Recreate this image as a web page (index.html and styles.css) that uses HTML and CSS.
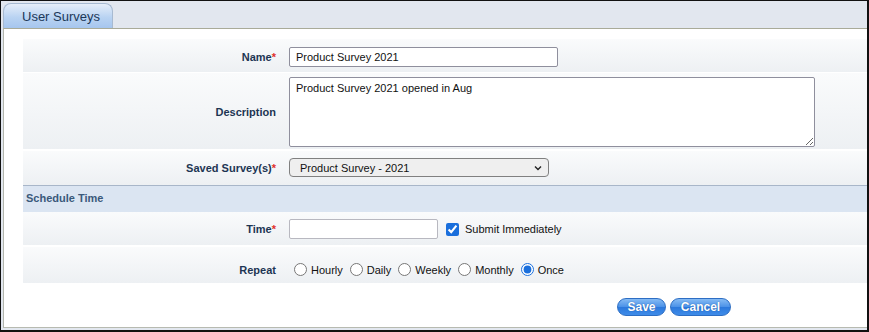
FILE: index.html
```html
<!DOCTYPE html>
<html>
<head>
<meta charset="utf-8">
<link rel="stylesheet" href="styles.css">
</head>
<body>
<div class="frame">
  <div class="tabbar">
    <div class="tab">User Surveys</div>
  </div>
  <div class="panel">
    <div class="form">
      <div class="row row-name">
        <label class="lbl">Name<span class="req">*</span></label>
        <div class="field"><input class="txt name-input" type="text" value="Product Survey 2021"></div>
      </div>
      <div class="row row-desc">
        <label class="lbl">Description</label>
        <div class="field"><textarea class="area">Product Survey 2021 opened in Aug</textarea></div>
      </div>
      <div class="row row-saved">
        <label class="lbl">Saved Survey(s)<span class="req">*</span></label>
        <div class="field">
          <div class="selwrap">
            <select class="sel"><option>Product Survey - 2021</option></select>
            <svg class="chev" width="8" height="6" viewBox="0 0 8 6"><path d="M1 1.5 L4 4.5 L7 1.5" fill="none" stroke="#222" stroke-width="1.4"/></svg>
          </div>
        </div>
      </div>
      <div class="section">Schedule Time</div>
      <div class="row row-time">
        <label class="lbl">Time<span class="req">*</span></label>
        <div class="field inline">
          <input class="txt time-input" type="text">
          <label class="chk"><input type="checkbox" checked><span>Submit Immediately</span></label>
        </div>
      </div>
      <div class="row row-repeat">
        <label class="lbl">Repeat</label>
        <div class="field inline radios">
          <label class="rad"><input type="radio" name="r"><span>Hourly</span></label>
          <label class="rad"><input type="radio" name="r"><span>Daily</span></label>
          <label class="rad"><input type="radio" name="r"><span>Weekly</span></label>
          <label class="rad"><input type="radio" name="r"><span>Monthly</span></label>
          <label class="rad"><input type="radio" name="r" checked><span>Once</span></label>
        </div>
      </div>
      <div class="actions">
        <button class="btn btn-save">Save</button>
        <button class="btn btn-cancel">Cancel</button>
      </div>
    </div>
  </div>
</div>
</body>
</html>
```

FILE: styles.css
```css
* { box-sizing: border-box; }
html, body { margin: 0; padding: 0; }
body {
  font-family: "Liberation Sans", Arial, sans-serif;
  background: #ffffff;
}
.frame {
  width: 869px;
  height: 332px;
  border-top: 1px solid #111;
  border-left: 1px solid #111;
  border-right: 2px solid #111;
  border-bottom: 2px solid #111;
  background: #e2e7ef;
  display: flex;
  flex-direction: column;
}
.tabbar {
  height: 27px;
  padding: 2px 0 0 2px;
  display: flex;
}
.tab {
  width: 110px;
  height: 25px;
  border: 1px solid #a7bad1;
  border-bottom: none;
  border-radius: 8px 8px 0 0;
  background: linear-gradient(#e6eef9, #b9d3f2 55%, #a6c6ee);
  color: #1c3858;
  font-size: 13px;
  padding: 5px 0 0 18px;
  line-height: 15px;
}
.panel {
  margin-left: 2px;
  height: 300px;
  background: #fff;
  border-top: 1px solid #a9ab99;
  border-left: 1px solid #b3b6ad;
  border-bottom: 1px solid #b7bab0;
}
.form {
  margin: 10px 0 0 19px;
}
.row {
  display: grid;
  grid-template-columns: 266px 1fr;
  align-items: center;
  background: linear-gradient(#fafbfc, #edf0f3);
}
.lbl {
  text-align: right;
  padding-right: 13px;
  font-size: 11px;
  font-weight: bold;
  color: #1d3553;
}
.req { color: #e0322c; }
.field { display: flex; align-items: center; }
.row-name { padding: 8px 0 5px; margin-bottom: 1px; }
.row-desc { padding: 4px 0 2px; margin-bottom: 2px; }
.row-saved { padding: 7px 0 8px; border-bottom: 1px solid #a8b6c9; }
.row-time { padding: 7px 0 6px; margin-bottom: 2px; }
.row-repeat { padding: 16px 0 7px; }
.txt {
  height: 20px;
  border: 1px solid #8f8f9d;
  border-radius: 2px;
  font-family: "Liberation Sans", Arial, sans-serif;
  font-size: 11px;
  padding: 1px 6px;
  color: #111;
  background: #fff;
}
.name-input { width: 269px; }
.time-input { width: 149px; border-color: #b8b8c0; }
.area {
  width: 526px;
  height: 70px;
  border: 1px solid #8f8f9d;
  border-radius: 2px;
  font-family: "Liberation Sans", Arial, sans-serif;
  font-size: 11px;
  padding: 4px 6px;
  color: #111;
  margin: 0;
}
.selwrap { position: relative; display: flex; }
.sel {
  -webkit-appearance: none;
  appearance: none;
  width: 260px;
  height: 19px;
  font-family: "Liberation Sans", Arial, sans-serif;
  font-size: 11px;
  border: 1px solid #808080;
  border-radius: 4px;
  background: #efefef;
  color: #111;
  padding: 0 10px;
  margin: 0;
}
.chev {
  position: absolute;
  right: 7px;
  top: 7px;
  pointer-events: none;
}
.section {
  height: 26px;
  background: #dbe5f2;
  color: #3a597b;
  font-size: 11px;
  font-weight: bold;
  padding: 6px 0 0 3px;
}
.chk, .rad {
  display: flex;
  align-items: center;
  font-size: 11px;
  color: #111;
}
.chk { margin-left: 8px; }
.chk input { width: 13px; height: 13px; margin: 0 6px 0 0; accent-color: #1a6fdc; }
.rad input { width: 13px; height: 13px; margin: 0 4px 0 5px; accent-color: #1a6fdc; }
.rad { margin-right: 2px; }
.actions {
  display: flex;
  gap: 4px;
  padding-left: 594px;
  margin-top: 15px;
}
.btn {
  height: 18px;
  border: 1px solid #2d6ec4;
  border-radius: 9px;
  background: linear-gradient(#86bbf4, #4a91e8 50%, #2b78dc 51%, #3f8ce8);
  color: #fff;
  font-family: "Liberation Sans", Arial, sans-serif;
  font-size: 12px;
  font-weight: bold;
  text-shadow: 0 0 1px #1a4f99;
  padding: 0;
  line-height: 16px;
}
.btn-save { width: 49px; }
.btn-cancel { width: 61px; }
```
